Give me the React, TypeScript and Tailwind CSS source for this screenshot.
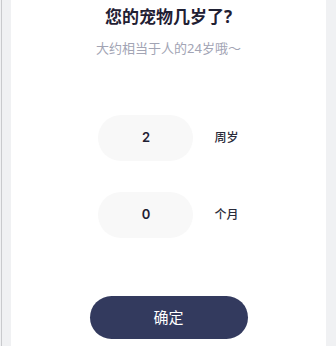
export default function App() {
  const rows = [
    { value: "2", unit: "周岁" },
    { value: "0", unit: "个月" },
  ];

  return (
    <div
      className="flex h-[346px] w-[336px] overflow-hidden bg-[#f0f1f3]"
      style={{ fontFamily: '"Noto Sans", "Noto Sans CJK SC", sans-serif' }}
    >
      <div className="ml-px w-px bg-[#c9cacd]" />
      <div className="ml-[9px] mr-[10px] flex flex-1 flex-col items-center bg-white">
        <h1 className="mt-[5px] text-[17px] leading-6 font-bold text-[#1f2033]">
          您的宠物几岁了?
        </h1>
        <p className="mt-[9px] text-[13px] leading-5 text-[#a2a4b4]">
          大约相当于人的24岁哦～
        </p>

        <div className="mt-[57px] flex flex-col gap-[31px]">
          {rows.map((row) => (
            <div key={row.unit} className="flex items-center gap-[21px]">
              <div className="flex h-[46px] w-[95px] items-center justify-center rounded-[23px] bg-[#f8f8f8] font-[Inter] text-[13px] font-semibold text-[#1f2033]">
                {row.value}
              </div>
              <span className="text-[12px] font-medium text-[#2a2b3a]">
                {row.unit}
              </span>
            </div>
          ))}
        </div>

        <button className="mt-[58px] h-[43px] w-[158px] rounded-full bg-[#333a5e] text-[15px] text-white">
          确定
        </button>
      </div>
    </div>
  );
}
